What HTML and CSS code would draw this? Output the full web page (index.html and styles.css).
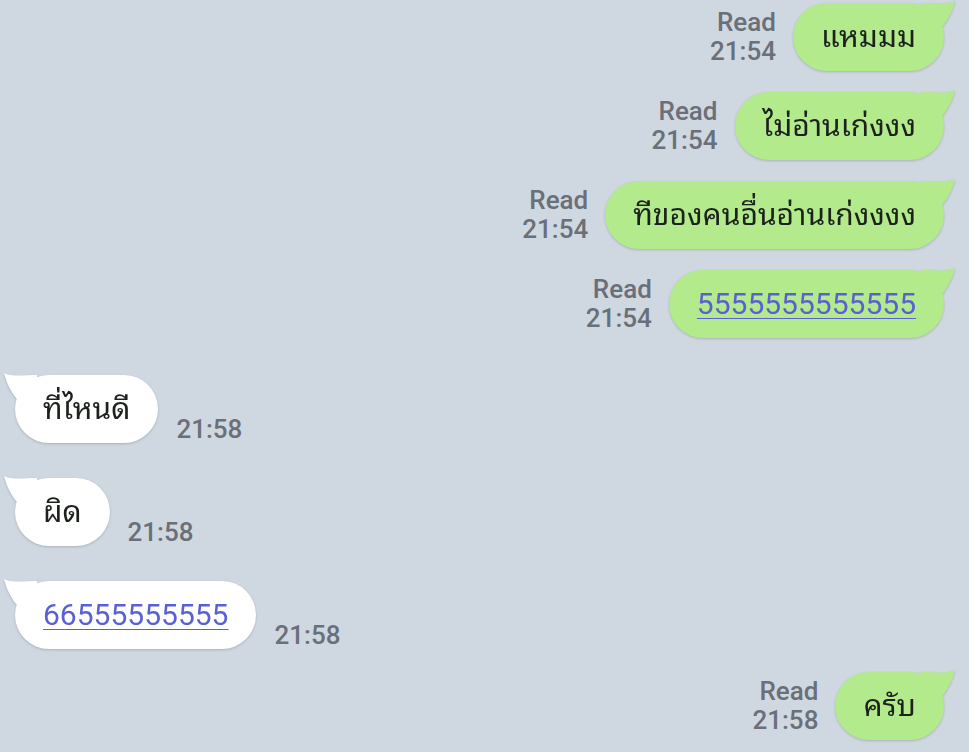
FILE: index.html
```html
<!DOCTYPE html>
<html lang="th">
<head>
<meta charset="utf-8">
<title>Chat</title>
<link rel="stylesheet" href="styles.css">
</head>
<body>
<div class="chat">
  <div class="row out">
    <div class="meta"><span>Read</span><span>21:54</span></div>
    <div class="bubble green">แหมมม<svg class="tail" viewBox="0 0 40 40" width="40" height="40"><path d="M4 4 C16 4 30 6 37 2 C35 10 31 20 24 28 L10 34 L4 34 Z"/></svg></div>
  </div>
  <div class="row out">
    <div class="meta"><span>Read</span><span>21:54</span></div>
    <div class="bubble green">ไม่อ่านเก่งงง<svg class="tail" viewBox="0 0 40 40" width="40" height="40"><path d="M4 4 C16 4 30 6 37 2 C35 10 31 20 24 28 L10 34 L4 34 Z"/></svg></div>
  </div>
  <div class="row out">
    <div class="meta"><span>Read</span><span>21:54</span></div>
    <div class="bubble green">ทีของคนอื่นอ่านเก่งงงง<svg class="tail" viewBox="0 0 40 40" width="40" height="40"><path d="M4 4 C16 4 30 6 37 2 C35 10 31 20 24 28 L10 34 L4 34 Z"/></svg></div>
  </div>
  <div class="row out">
    <div class="meta"><span>Read</span><span>21:54</span></div>
    <div class="bubble green"><a class="link" href="#">5555555555555</a><svg class="tail" viewBox="0 0 40 40" width="40" height="40"><path d="M4 4 C16 4 30 6 37 2 C35 10 31 20 24 28 L10 34 L4 34 Z"/></svg></div>
  </div>
  <div class="row in first-in">
    <div class="bubble white">ที่ไหนดี<svg class="tail" viewBox="0 0 40 40" width="40" height="40"><path d="M4 4 C16 4 30 6 37 2 C35 10 31 20 24 28 L10 34 L4 34 Z"/></svg></div>
    <div class="meta"><span>21:58</span></div>
  </div>
  <div class="row in">
    <div class="bubble white">ผิด<svg class="tail" viewBox="0 0 40 40" width="40" height="40"><path d="M4 4 C16 4 30 6 37 2 C35 10 31 20 24 28 L10 34 L4 34 Z"/></svg></div>
    <div class="meta"><span>21:58</span></div>
  </div>
  <div class="row in last-in">
    <div class="bubble white"><a class="link" href="#">66555555555</a><svg class="tail" viewBox="0 0 40 40" width="40" height="40"><path d="M4 4 C16 4 30 6 37 2 C35 10 31 20 24 28 L10 34 L4 34 Z"/></svg></div>
    <div class="meta"><span>21:58</span></div>
  </div>
  <div class="row out">
    <div class="meta"><span>Read</span><span>21:58</span></div>
    <div class="bubble green">ครับ<svg class="tail" viewBox="0 0 40 40" width="40" height="40"><path d="M4 4 C16 4 30 6 37 2 C35 10 31 20 24 28 L10 34 L4 34 Z"/></svg></div>
  </div>
</div>
</body>
</html>
```
FILE: styles.css
```css
html, body {
  margin: 0;
  padding: 0;
  background: #cfd7e1;
  height: 100%;
  overflow: hidden;
}
.chat {
  display: flex;
  flex-direction: column;
  padding: 3px 25px 0 15px;
  font-family: Roboto, "Noto Sans Thai Looped", "Loma", "Garuda", "Noto Sans Thai", "Noto Sans", sans-serif;
}
.row {
  display: flex;
  align-items: flex-end;
}
.row.out {
  justify-content: flex-end;
  margin-bottom: 21px;
}
.row.in {
  justify-content: flex-start;
  margin-bottom: 35px;
}
.row.first-in {
  margin-top: 16px;
}
.row.last-in {
  margin-bottom: 23px;
}
.bubble {
  position: relative;
  height: 68px;
  line-height: 68px;
  padding: 0 28px;
  border-radius: 34px;
  font-size: 30px;
  color: #1c211c;
  white-space: nowrap;
  filter: drop-shadow(0 1px 1px rgba(60, 70, 60, 0.25));
}
.bubble.green { background: #b3ea8c; }
.bubble.green .tail { fill: #b3ea8c; }
.bubble.white { background: #ffffff; }
.bubble.white .tail { fill: #ffffff; }
.tail {
  position: absolute;
  top: -4px;
  overflow: visible;
}
.out .tail { right: -14px; }
.in .tail { left: -14px; transform: scaleX(-1); }
.link {
  color: #5b5fd6;
  text-decoration: underline;
  text-decoration-thickness: 1px;
  text-underline-offset: 4px;
}
.meta {
  display: flex;
  flex-direction: column;
  font-size: 26px;
  font-weight: 500;
  color: #6a6f78;
  line-height: 29px;
  padding-bottom: 5px;
}
.out .meta {
  align-items: flex-end;
  margin-right: 17px;
}
.in .meta {
  margin-left: 18px;
  padding-bottom: 0;
  margin-bottom: -1px;
}
```
